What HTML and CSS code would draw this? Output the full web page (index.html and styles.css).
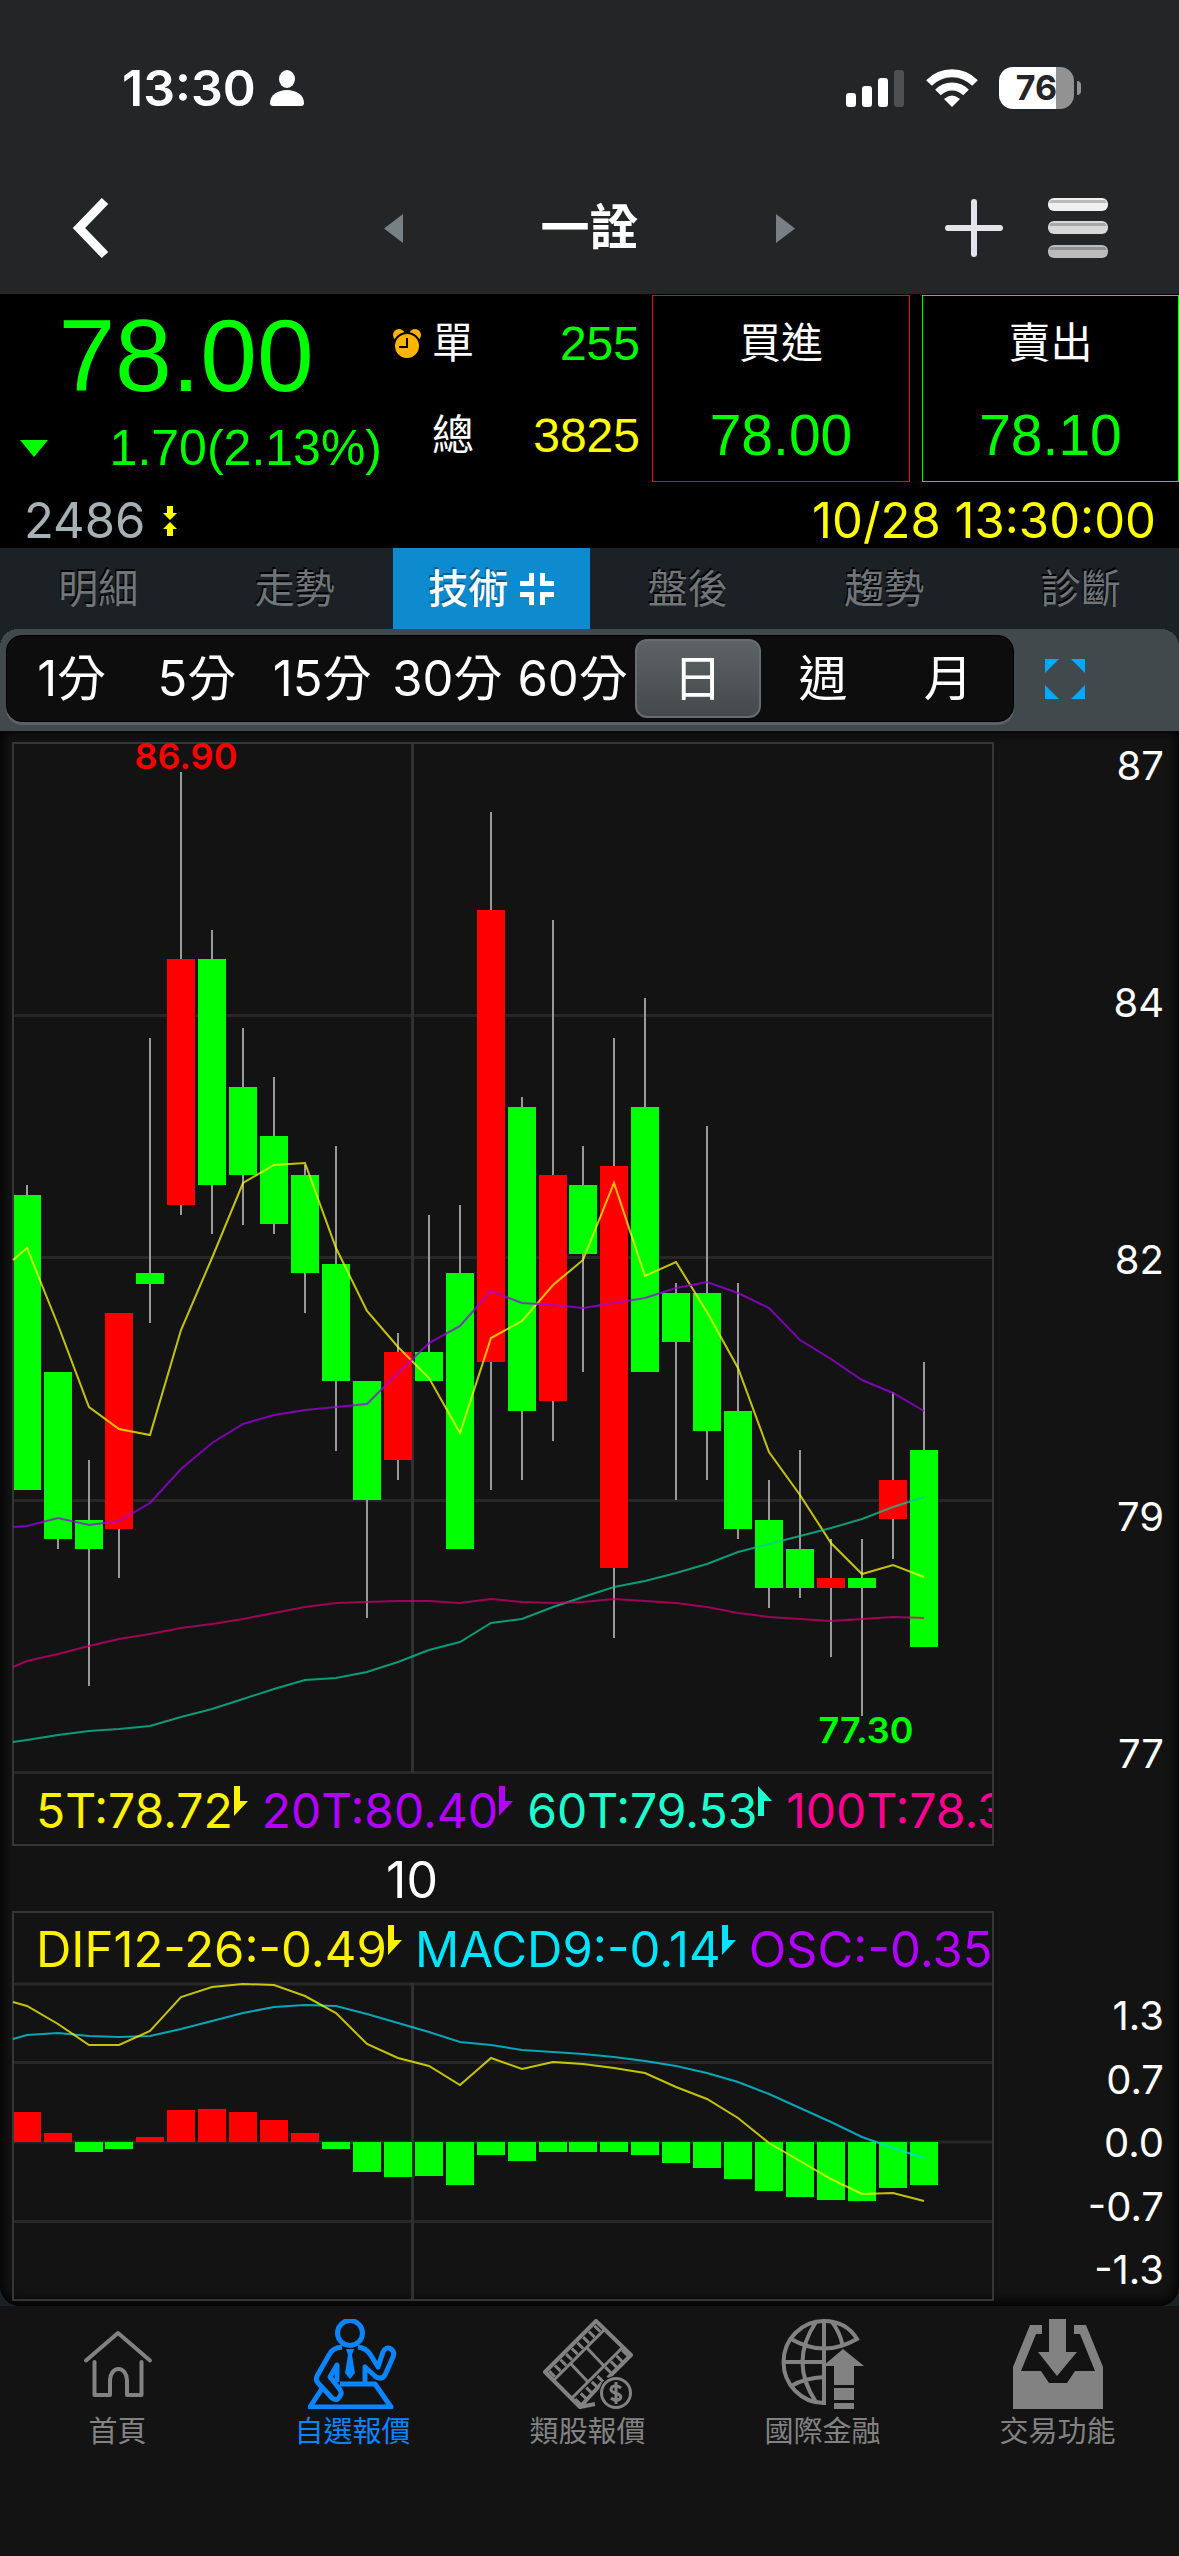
FILE: index.html
```html
<!DOCTYPE html>
<html lang="zh-Hant">
<head>
<meta charset="utf-8">
<meta name="viewport" content="width=device-width, initial-scale=1">
<title>一詮 2486</title>
<link rel="stylesheet" href="styles.css">
</head>
<body>
<div class="app">
  <header class="top">
    <div class="status">
      <div class="status-time">
        <span>13:30</span>
        <svg width="34" height="38" viewBox="0 0 34 38" fill="#fff" aria-hidden="true"><ellipse cx="17" cy="10" rx="8" ry="9"/><path d="M0 34C0 26 8 21 17 21s17 5 17 13q0 3-3 3H3q-3 0-3-3z"/></svg>
      </div>
      <div class="status-icons">
        <svg width="59" height="38" viewBox="0 0 59 38" fill="#fff" aria-hidden="true"><rect y="24" width="10" height="14" rx="3"/><rect x="16" y="17" width="10" height="21" rx="3"/><rect x="32" y="9" width="10" height="29" rx="3"/><rect x="48" y="1" width="10" height="37" rx="3" fill="#4e5051"/></svg>
        <svg width="52" height="38" viewBox="0 0 52 38" aria-hidden="true"><g fill="none" stroke="#fff" stroke-width="8"><path d="M3 14C16 1 36 1 49 14"/><path d="M12 23.500C20 15.500 32 15.500 40 23.500"/></g><path d="M18 30q8-7 16 0l-8 8z" fill="#fff"/></svg>
        <span class="battery"><span class="battery-body">76</span><span class="battery-tip"></span></span>
      </div>
    </div>
    <nav class="nav">
      <button class="plain" type="button" aria-label="返回"><svg width="38" height="62" viewBox="0 0 38 62"><path d="M34 4 8 31l26 27" fill="none" stroke="#fff" stroke-width="9"/></svg></button>
      <div class="switcher">
        <button class="plain" type="button" aria-label="上一檔"><svg width="19" height="29" viewBox="0 0 19 29"><path d="M19 0v29L0 14.500z" fill="#788085"/></svg></button>
        <h1>一詮</h1>
        <button class="plain" type="button" aria-label="下一檔"><svg width="19" height="29" viewBox="0 0 19 29"><path d="M0 0v29l19-14.500z" fill="#788085"/></svg></button>
      </div>
      <div class="actions">
        <button class="plain" type="button" aria-label="新增"><svg width="58" height="58" viewBox="0 0 58 58"><path d="M29 3v52M3 29h52" stroke="#e4e4e8" stroke-width="6" stroke-linecap="round"/></svg></button>
        <button class="plain" type="button" aria-label="選單"><svg width="60" height="62" viewBox="0 0 60 62"><rect y="1" width="60" height="13" rx="6" fill="#f0f0f0"/><path d="M3 3h54l2 3H1z" fill="#bbb"/><rect y="24" width="60" height="13" rx="6" fill="#d8d8d8"/><path d="M3 26h54l2 3H1z" fill="#a8a8a8"/><rect y="48" width="60" height="13" rx="6" fill="#bcbcbc"/><path d="M3 50h54l2 3H1z" fill="#929292"/></svg></button>
      </div>
    </nav>
  </header>

  <section class="quote">
    <div class="quote-main">
      <div class="price">
        <div class="price-last">78.00</div>
        <div class="price-change"><svg width="28" height="17" viewBox="0 0 28 17"><path d="M0 0h28L14 17z" fill="#0f0"/></svg><span>1.70(2.13%)</span></div>
      </div>
      <dl class="volume">
        <div>
          <dt><svg width="28" height="30" viewBox="0 0 28 30" aria-hidden="true"><circle cx="6" cy="6" r="6" fill="#ffb400"/><circle cx="22" cy="6" r="6" fill="#ffb400"/><circle cx="14" cy="17" r="13" fill="#ffb400" stroke="#000" stroke-width="2"/><path d="M14 9v9H6" fill="none" stroke="#000" stroke-width="2"/></svg>單</dt>
          <dd class="green">255</dd>
        </div>
        <div><dt>總</dt><dd class="yellow">3825</dd></div>
      </dl>
      <button class="deal deal-buy" type="button"><span>買進</span><b>78.00</b></button>
      <button class="deal deal-sell" type="button"><span>賣出</span><b>78.10</b></button>
    </div>
    <div class="quote-sub">
      <span class="code">2486<svg width="14" height="30" viewBox="0 0 14 30" aria-hidden="true"><path d="M4 0h6v7h4l-7 7-7-7h4zM4 30h6v-7h4l-7-7-7 7h4z" fill="#ff0"/></svg></span>
      <time class="yellow">10/28 13:30:00</time>
    </div>
  </section>

  <nav class="tabs">
    <a href="#">明細</a>
    <a href="#">走勢</a>
    <a href="#" class="active" aria-current="page">技術<svg width="34" height="34" viewBox="0 0 34 34" aria-hidden="true"><path d="M11.500 1v10.500H0M22.500 1v10.500H34M11.500 33V22.500H0M22.500 33V22.500H34" fill="none" stroke="#fff" stroke-width="5"/></svg></a>
    <a href="#">盤後</a>
    <a href="#">趨勢</a>
    <a href="#">診斷</a>
  </nav>

  <div class="periods">
    <div class="segments">
      <button type="button">1分</button>
      <button type="button">5分</button>
      <button type="button">15分</button>
      <button type="button">30分</button>
      <button type="button">60分</button>
      <button type="button" class="active" aria-pressed="true">日</button>
      <button type="button">週</button>
      <button type="button">月</button>
    </div>
    <button class="plain" type="button" aria-label="全螢幕"><svg width="40" height="40" viewBox="0 0 40 40"><path d="M0 0h14L0 14zM40 0v14L26 0zM0 40V26l14 14zM40 40H26l14-14z" fill="#0af"/></svg></button>
  </div>

  <div class="charts-back">
  <main class="charts">
    <svg class="plot" viewBox="12 742 982 1032" role="img" aria-label="日K線">
      <g fill="none" stroke="#272727" stroke-width="3"><path d="M13 1015.500H993M13 1257.500H993M13 1500.500H993M13 1772.500H993"/><path stroke="#303030" d="M412.500 743V1773"/></g>
      <path d="M13 1774V743H993V1774" fill="none" stroke="#363636" stroke-width="2"/>
      <path fill="none" stroke="#999" stroke-width="2" d="M27 1185V1490M58 1372V1549M89 1460V1686M119 1313V1578M150 1038V1323M181 772V1215M212 930V1234M243 1028V1225M274 1077V1234M305 1165V1313M336 1146V1451M367 1381V1618M398 1333V1480M429 1215V1381M460 1205V1548M491 812V1490M522 1097V1480M553 920V1441M583 1146V1372M614 1038V1638M645 998V1372M676 1283V1500M707 1126V1480M738 1283V1539M769 1480V1608M800 1450V1598M831 1539V1657M862 1539V1716M893 1392V1559M924 1362V1647"/>
      <path fill="#f00" d="M105 1313h28v216h-28zM167 959h28v246h-28zM384 1352h28v108h-28zM477 910h28v452h-28zM539 1175h28v226h-28zM600 1166h28v402h-28zM817 1578h28v10h-28zM879 1480h28v39h-28z"/>
      <path fill="#0f0" d="M14 1195h27v295H14zM44 1372h28v167H44zM75 1520h28v29H75zM136 1273h28v11h-28zM198 959h28v226h-28zM229 1087h28v88h-28zM260 1136h28v88h-28zM291 1175h28v98h-28zM322 1264h28v117h-28zM353 1381h28v119h-28zM415 1352h28v29h-28zM446 1273h28v276h-28zM508 1107h28v304h-28zM569 1185h28v69h-28zM631 1107h28v265h-28zM662 1293h28v49h-28zM693 1293h28v138h-28zM724 1411h28v118h-28zM755 1520h28v68h-28zM786 1549h28v39h-28zM848 1578h28v10h-28zM910 1450h28v197h-28z"/>
      <g class="averages">
        <polyline stroke="#ff0" points="13,1260 27,1248 58,1325 89,1407 119,1429 150,1435 181,1330 212,1258 243,1183 274,1165 305,1163 336,1248 367,1311 398,1347 429,1378 460,1433 491,1338 522,1321 553,1285 583,1260 614,1183 645,1276 676,1262 707,1312 738,1368 769,1452 800,1495 831,1543 862,1574 893,1565 924,1577"/>
        <polyline stroke="#a000e8" points="13,1527 27,1526 58,1518 89,1525 119,1521 150,1503 181,1469 212,1443 243,1424 274,1415 305,1410 336,1407 367,1404 398,1373 429,1343 460,1326 491,1291 522,1303 553,1305 583,1308 614,1303 645,1298 676,1288 707,1282 738,1293 769,1308 800,1340 831,1359 862,1380 893,1393 924,1411"/>
        <polyline stroke="#0ec896" points="13,1742 27,1740 58,1735 89,1731 119,1729 150,1726 181,1717 212,1709 243,1699 274,1689 305,1680 336,1678 367,1672 398,1662 429,1650 460,1642 491,1623 522,1619 553,1607 583,1597 614,1587 645,1581 676,1573 707,1564 738,1552 769,1544 800,1536 831,1528 862,1519 893,1507 924,1497"/>
        <polyline stroke="#cc0070" points="13,1667 27,1661 58,1654 89,1646 119,1639 150,1634 181,1628 212,1624 243,1619 274,1613 305,1607 336,1603 367,1602 398,1601 429,1601 460,1603 491,1599 522,1602 553,1603 583,1602 614,1599 645,1601 676,1603 707,1607 738,1613 769,1617 800,1619 831,1621 862,1619 893,1617 924,1618"/>
      </g>
      <text class="peak" x="186" y="769" fill="#f00">86.90</text>
      <text class="peak" x="866" y="1743" fill="#0f0">77.30</text>
    </svg>
    <div class="axis axis-price"><span>87</span><span>84</span><span>82</span><span>79</span><span>77</span></div>

    <div class="legend legend-price">
      <span class="c-yellow">5T:78.72<svg class="trend" viewBox="0 0 14 30"><path d="M0 0h6v15h8L0 30z"/></svg></span>
      <span class="c-purple">20T:80.40<svg class="trend" viewBox="0 0 14 30"><path d="M0 0h6v15h8L0 30z"/></svg></span>
      <span class="c-teal">60T:79.53<svg class="trend" viewBox="0 0 14 30"><path d="M0 30h6V15h8L0 0z"/></svg></span>
      <span class="c-pink">100T:78.3</span>
    </div>

    <div class="dates"><span>10</span></div>

    <div class="legend legend-macd">
      <span class="c-yellow">DIF12-26:-0.49<svg class="trend" viewBox="0 0 14 30"><path d="M0 0h6v15h8L0 30z"/></svg></span>
      <span class="c-cyan">MACD9:-0.14<svg class="trend" viewBox="0 0 14 30"><path d="M0 0h6v15h8L0 30z"/></svg></span>
      <span class="c-purple">OSC:-0.35</span>
    </div>

    <svg class="plot" viewBox="12 1983 982 318" role="img" aria-label="MACD">
      <g fill="none" stroke="#272727" stroke-width="3"><path d="M13 1984H993M13 2062.500H993M13 2142H993M13 2221.500H993"/><path stroke="#303030" d="M412.500 1983V2300"/></g>
      <path d="M13 1983V2300H993V1983" fill="none" stroke="#363636" stroke-width="2"/>
      <path fill="#f00" d="M14 2112h27v30H14zM44 2133h28v9H44zM136 2137h28v5h-28zM167 2110h28v32h-28zM198 2109h28v33h-28zM229 2112h28v30h-28zM260 2120h28v22h-28zM291 2133h28v9h-28z"/>
      <path fill="#0f0" d="M75 2142h28v10H75zM105 2142h28v7h-28zM322 2142h28v7h-28zM353 2142h28v30h-28zM384 2142h28v35h-28zM415 2142h28v34h-28zM446 2142h28v43h-28zM477 2142h28v13h-28zM508 2142h28v19h-28zM539 2142h28v10h-28zM569 2142h28v10h-28zM600 2142h28v10h-28zM631 2142h28v13h-28zM662 2142h28v21h-28zM693 2142h28v26h-28zM724 2142h28v37h-28zM755 2142h28v49h-28zM786 2142h28v55h-28zM817 2142h28v58h-28zM848 2142h28v59h-28zM879 2142h28v46h-28zM910 2142h28v43h-28z"/>
      <g class="averages">
        <polyline stroke="#00d8f0" points="13,2039 27,2035 58,2033 89,2036 119,2037 150,2036 181,2029 212,2021 243,2013 274,2007 305,2005 336,2006 367,2014 398,2023 429,2032 460,2042 491,2045 522,2050 553,2052 583,2054 614,2057 645,2061 676,2066 707,2073 738,2082 769,2094 800,2108 831,2122 862,2137 893,2148 924,2158"/>
        <polyline stroke="#ff0" points="13,2002 27,2006 58,2024 89,2045 119,2045 150,2031 181,1997 212,1987 243,1984 274,1985 305,1996 336,2013 367,2044 398,2058 429,2066 460,2085 491,2058 522,2069 553,2062 583,2064 614,2068 645,2073 676,2087 707,2099 738,2118 769,2143 800,2161 831,2179 862,2194 893,2193 924,2201"/>
      </g>
    </svg>
    <div class="axis axis-macd"><span>1.3</span><span>0.7</span><span>0.0</span><span>-0.7</span><span>-1.3</span></div>
  </main>
  </div>

  <nav class="tabbar">
    <a href="#"><svg viewBox="0 0 90 90"><g fill="none" stroke="currentColor" stroke-width="4" stroke-linecap="round" stroke-linejoin="round"><path d="M13 41.500 45 14l32 27.500"/><path d="M21.500 43v33H37V61a8.500 11 0 0 1 17 0v15h14.500V43"/></g></svg>首頁</a>
    <a href="#" class="active" aria-current="page"><svg viewBox="0 0 90 90"><g fill="none" stroke="currentColor" stroke-width="5" stroke-linejoin="round"><circle cx="42" cy="14" r="12.500"/><path d="M34 28q-10 1-13 8L9 57q-2 4 2 8l13 14q5 4 8-2 3-4-2-9l-8-10 7-12v17"/><path d="M50 28q8 1 12 7l8 13 5-15q3-6 8-3 4 3 2 8l-8 18q-3 5-9 2L57 48v16"/><path d="M15 68 2 88h81L67 65H32"/></g><path d="M38 30h8l-2 6 3 18-5 6-5-6 3-18z" fill="currentColor"/></svg>自選報價</a>
    <a href="#"><svg viewBox="0 0 90 90"><g fill="none" stroke="currentColor" stroke-width="4" stroke-linejoin="round"><path d="M52 85 37 88 2 53 53 2l35 34-23 23M37 88l22-24"/><path d="M11 61 61 11M29 79l50-50M28 45l17 18M44 29l17 18" stroke-width="3"/><g stroke-width="8" stroke-dasharray="3 5"><path d="M8 56 56 8M34 84l27-28M64 52l19-19"/></g></g><circle cx="73" cy="74" r="17" fill="#131313"/><circle cx="73" cy="74" r="14.500" fill="none" stroke="currentColor" stroke-width="3"/><path d="M78 69q-5-4-9-1-3 4 3 6 8 2 5 6-4 3-9-1M73 63v22" fill="none" stroke="currentColor" stroke-width="3"/></svg>類股報價</a>
    <a href="#"><svg viewBox="-3 0 90 90"><g fill="none" stroke="currentColor" stroke-width="4"><path d="M43 84A40.500 41 0 0 1 43 2q22 0 33 18Q43 39 10 20"/><path d="M43 0v86M2 43h41M10 67q14-8 33-9M35 3q-27 40 0 80M51 3q8 10 11 25"/></g><path d="M62 30 83 47H73v19H53V47H42zM53 69h20v12H53zM53 84h20v6H53z" fill="currentColor"/></svg>國際金融</a>
    <a href="#"><svg viewBox="0 0 90 90" fill="currentColor"><path d="M0 48 17 6h12v9h-6L8 52h20l8 12h18l8-12h20L67 15h-6V6h12l17 42v42H0z"/><path d="M36 0h17v33h11L44 57 25 33h11z"/></svg>交易功能</a>
  </nav>
</div>
</body>
</html>
```
FILE: styles.css
```css
* { box-sizing: border-box; }
body { margin: 0; background: #131313; color: #fff; font-family: Inter, "Noto Sans CJK TC", sans-serif; }
button { font: inherit; color: inherit; background: none; border: 0; padding: 0; }
a { color: inherit; text-decoration: none; }
svg { display: block; flex: none; }
.plain { display: flex; }
.app { display: flex; flex-direction: column; min-height: 100vh; }
.green { color: #0f0; }
.yellow { color: #ff0; }

/* status bar and title */
.top { background: #232526; }
.status { display: flex; justify-content: space-between; padding: 60px 98px 46px 122px; }
.status-time, .status-icons { display: flex; align-items: center; height: 56px; }
.status-time { gap: 14px; font-size: 50px; font-weight: 600; }
.status-icons { gap: 21px; }
.battery { display: flex; align-items: center; gap: 3px; }
.battery-body { width: 75px; height: 42px; border-radius: 14px; background: linear-gradient(90deg, #fff 76%, #929292 76%); color: #232526; font-size: 34px; font-weight: 700; line-height: 42px; text-align: center; }
.battery-tip { width: 4px; height: 14px; border-radius: 0 4px 4px 0; background: #929292; }
.nav { display: grid; grid-template-columns: 1fr 411px 1fr; align-items: center; height: 132px; padding: 0 71px; }
.switcher { display: flex; align-items: center; justify-content: space-between; }
.switcher h1 { margin: 0; font-size: 49px; font-weight: 700; line-height: 60px; }
.actions { display: flex; align-items: center; justify-content: flex-end; gap: 45px; }

/* quote */
.quote { background: #000; padding-top: 1px; }
.quote-main { display: grid; grid-template-columns: 386fr 266fr 270fr 257fr; height: 187px; font-family: "Liberation Sans", "Noto Sans CJK TC", sans-serif; }
.price { padding: 7px 4px 0 20px; color: #0f0; }
.price-last { font-size: 102px; line-height: 108px; text-align: center; padding-right: 30px; }
.price-change { display: flex; align-items: center; justify-content: space-between; margin-top: 8px; font-size: 50px; line-height: 60px; }
.volume { margin: 0; padding: 3px 12px 0 0; }
.volume div { display: flex; align-items: center; justify-content: space-between; height: 92px; }
.volume dt { display: flex; align-items: center; justify-content: flex-end; gap: 11px; width: 88px; font-size: 42px; line-height: 60px; }
.volume dd { margin: 0; font-size: 48px; line-height: 60px; }
.deal { display: flex; flex-direction: column; align-items: center; gap: 31px; padding-top: 18px; border: 1px solid; }
.deal span { color: #fff; font-size: 42px; line-height: 60px; }
.deal b { color: #0f0; font-size: 57px; font-weight: 400; line-height: 60px; }
.deal-buy { border-color: #f00; margin-right: 12px; }
.deal-sell { border-color: #0f0; }
.quote-sub { display: flex; align-items: center; justify-content: space-between; height: 66px; padding: 11px 23px 0 24px; font-size: 49px; line-height: 55px; }
.code { display: flex; align-items: center; gap: 18px; color: #a7b0b5; }

/* section tabs */
.tabs { display: grid; grid-template-columns: repeat(6, 1fr); background: #1b2125; color: #6f7578; font-size: 40px; line-height: 81px; text-shadow: -1px -2px 0 #000; }
.tabs a { display: flex; align-items: center; justify-content: center; gap: 12px; }
.tabs .active { background: #0e8acf; color: #fff; font-weight: 500; text-shadow: -1px -2px 0 #0a5f91; }

/* period selector, its top corners rounded over the tabs' colour */
.periods { display: flex; align-items: center; gap: 31px; padding: 6px 94px 9px 6px; background: radial-gradient(circle at 18px 18px, #42494c 18px, #1b2125 18px) 0 0 / 18px 18px no-repeat, radial-gradient(circle at 0 18px, #42494c 18px, #1b2125 18px) 100% 0 / 18px 18px no-repeat, #42494c; }
.segments { flex: 1; display: grid; grid-template-columns: repeat(8, 1fr); padding: 3px 2px; background: #0d0d0e; border: 1px solid #000; border-radius: 16px; box-shadow: 0 3px 0 #5b6166; }
.segments button { height: 79px; font-size: 49px; line-height: 76px; white-space: nowrap; border-radius: 12px; }
.segments .active { background: linear-gradient(#5d6265, #44494c); border: 2px solid #666c70; }

/* charts */
.charts-back { background: #1b2226; }
.charts { display: grid; grid-template-columns: minmax(0, 982fr) minmax(0, 170fr); padding: 11px 15px 5px 12px; background: #131313; border-radius: 0 0 20px 20px; box-shadow: inset 0 -2px 12px 2px #000; }
.plot { grid-column: 1; width: 100%; height: auto; overflow: visible; }
.averages { fill: none; stroke-width: 2; stroke-opacity: .75; }
.peak { font-size: 36px; font-weight: 600; text-anchor: middle; }
.axis { display: grid; font-size: 40px; line-height: 48px; text-align: right; }
.axis-price { grid-template-rows: 237fr 257fr 257fr 237fr 44px; }
.axis-macd { align-content: space-between; padding: 9px 0 7px; }
.legend { grid-column: 1; display: flex; height: 72px; padding-left: 22px; overflow: hidden; border: 2px solid #363636; line-height: 74px; white-space: nowrap; }
.legend-price { gap: 14px; border-top: 0; font-size: 48px; }
.legend-macd { gap: 13px; border-bottom: 0; font-size: 49px; }
.legend span { display: flex; }
.trend { width: 14px; height: 30px; margin: 12px 0 0 1px; fill: currentColor; }
.c-yellow { color: #fff200; }
.c-purple { color: #b400ff; }
.c-teal { color: #1effd0; }
.c-pink { color: #ff0090; }
.c-cyan { color: #00e5ff; }
.dates { grid-column: 1; display: grid; grid-template-columns: 800fr 182fr; height: 65px; font-size: 50px; line-height: 68px; text-align: center; }

/* bottom bar */
.tabbar { flex: 1; display: grid; grid-template-columns: repeat(5, 1fr); padding: 13px 4px 90px 0; background: #131313; color: #828282; font-size: 29px; line-height: 42px; }
.tabbar a { display: flex; flex-direction: column; align-items: center; gap: 2px; }
.tabbar svg { width: 90px; height: 90px; }
.tabbar .active { color: #0a84ff; }
```
